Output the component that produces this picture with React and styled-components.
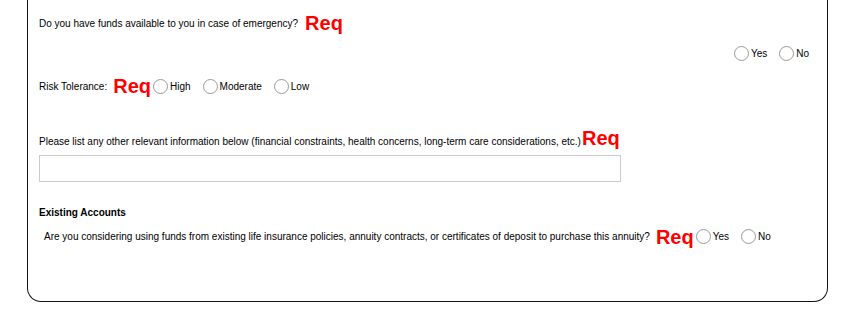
import React from 'react';
import styled, { createGlobalStyle } from 'styled-components';

const GlobalStyle = createGlobalStyle`
    html, body {
        margin: 0;
        padding: 0;
        background: #fff;
    }
    body {
        font-family: "Liberation Sans", Arial, sans-serif;
        font-size: 10px;
        color: #000;
    }
`;

const Page = styled.div`
    width: 859px;
    height: 316px;
    overflow: hidden;
`;

const Card = styled.div`
    box-sizing: border-box;
    width: 801px;
    margin-left: 27px;
    padding: 12px 8px 53px 11px;
    border: 1px solid #111;
    border-top: none;
    border-radius: 0 0 14px 14px;

    display: flex;
    flex-direction: column;
`;

const Row = styled.div`
    display: flex;
    align-items: ${p => p.$baseline ? 'baseline' : 'center'};
    justify-content: ${p => p.$right ? 'flex-end' : 'flex-start'};
    height: ${p => p.$h || 23}px;
    margin-top: ${p => p.$mt || 0}px;
    padding-left: ${p => p.$indent || 0}px;
    white-space: nowrap;
`;

const Label = styled.span`
    font-size: 10px;
`;

const Req = styled.span`
    color: #ff0000;
    font-weight: bold;
    font-size: 20px;
    margin-left: ${p => p.$ml || 0}px;
    position: relative;
    top: ${p => p.$dy || 0}px;
`;

const Option = styled.label`
    display: flex;
    align-items: center;
    margin-right: 10px;
    font-size: 10px;
`;

const Radio = styled.input.attrs({ type: 'radio' })`
    appearance: none;
    box-sizing: border-box;
    width: 15px;
    height: 15px;
    margin: 0 2px 0 2px;
    border: 1px solid #9a9a9a;
    border-radius: 50%;
    background: #fff;
`;

const TextBox = styled.input.attrs({ type: 'text' })`
    box-sizing: border-box;
    width: 582px;
    height: 27px;
    margin: 5px 0 0 0;
    border: 1px solid #cccccc;
    outline: none;
`;

const SectionTitle = styled.div`
    font-weight: bold;
    font-size: 10px;
    line-height: 12px;
    height: 12px;
    margin-top: 25px;
`;

const Choices = ({ name, options }) => (
    <>
        {options.map(o => (
            <Option key={o}>
                <Radio name={name} />
                {o}
            </Option>
        ))}
    </>
);

export default function App() {
    return (
        <Page>
            <GlobalStyle />
            <Card>
                <Row>
                    <Label>Do you have funds available to you in case of emergency?</Label>
                    <Req $ml={7}>Req</Req>
                </Row>
                <Row $right $h={15} $mt={11}>
                    <Choices name="funds" options={['Yes', 'No']} />
                </Row>
                <Row $mt={14}>
                    <Label>Risk Tolerance:</Label>
                    <Req $ml={6}>Req</Req>
                    <Choices name="risk" options={['High', 'Moderate', 'Low']} />
                </Row>
                <Row $baseline $mt={29}>
                    <Label>Please list any other relevant information below (financial constraints, health concerns, long-term care considerations, etc.)</Label>
                    <Req $ml={1}>Req</Req>
                </Row>
                <TextBox />
                <SectionTitle>Existing Accounts</SectionTitle>
                <Row $mt={6} $indent={5}>
                    <Label>Are you considering using funds from existing life insurance policies, annuity contracts, or certificates of deposit to purchase this annuity?</Label>
                    <Req $ml={6} $dy={1}>Req</Req>
                    <Choices name="existing" options={['Yes', 'No']} />
                </Row>
            </Card>
        </Page>
    );
}
